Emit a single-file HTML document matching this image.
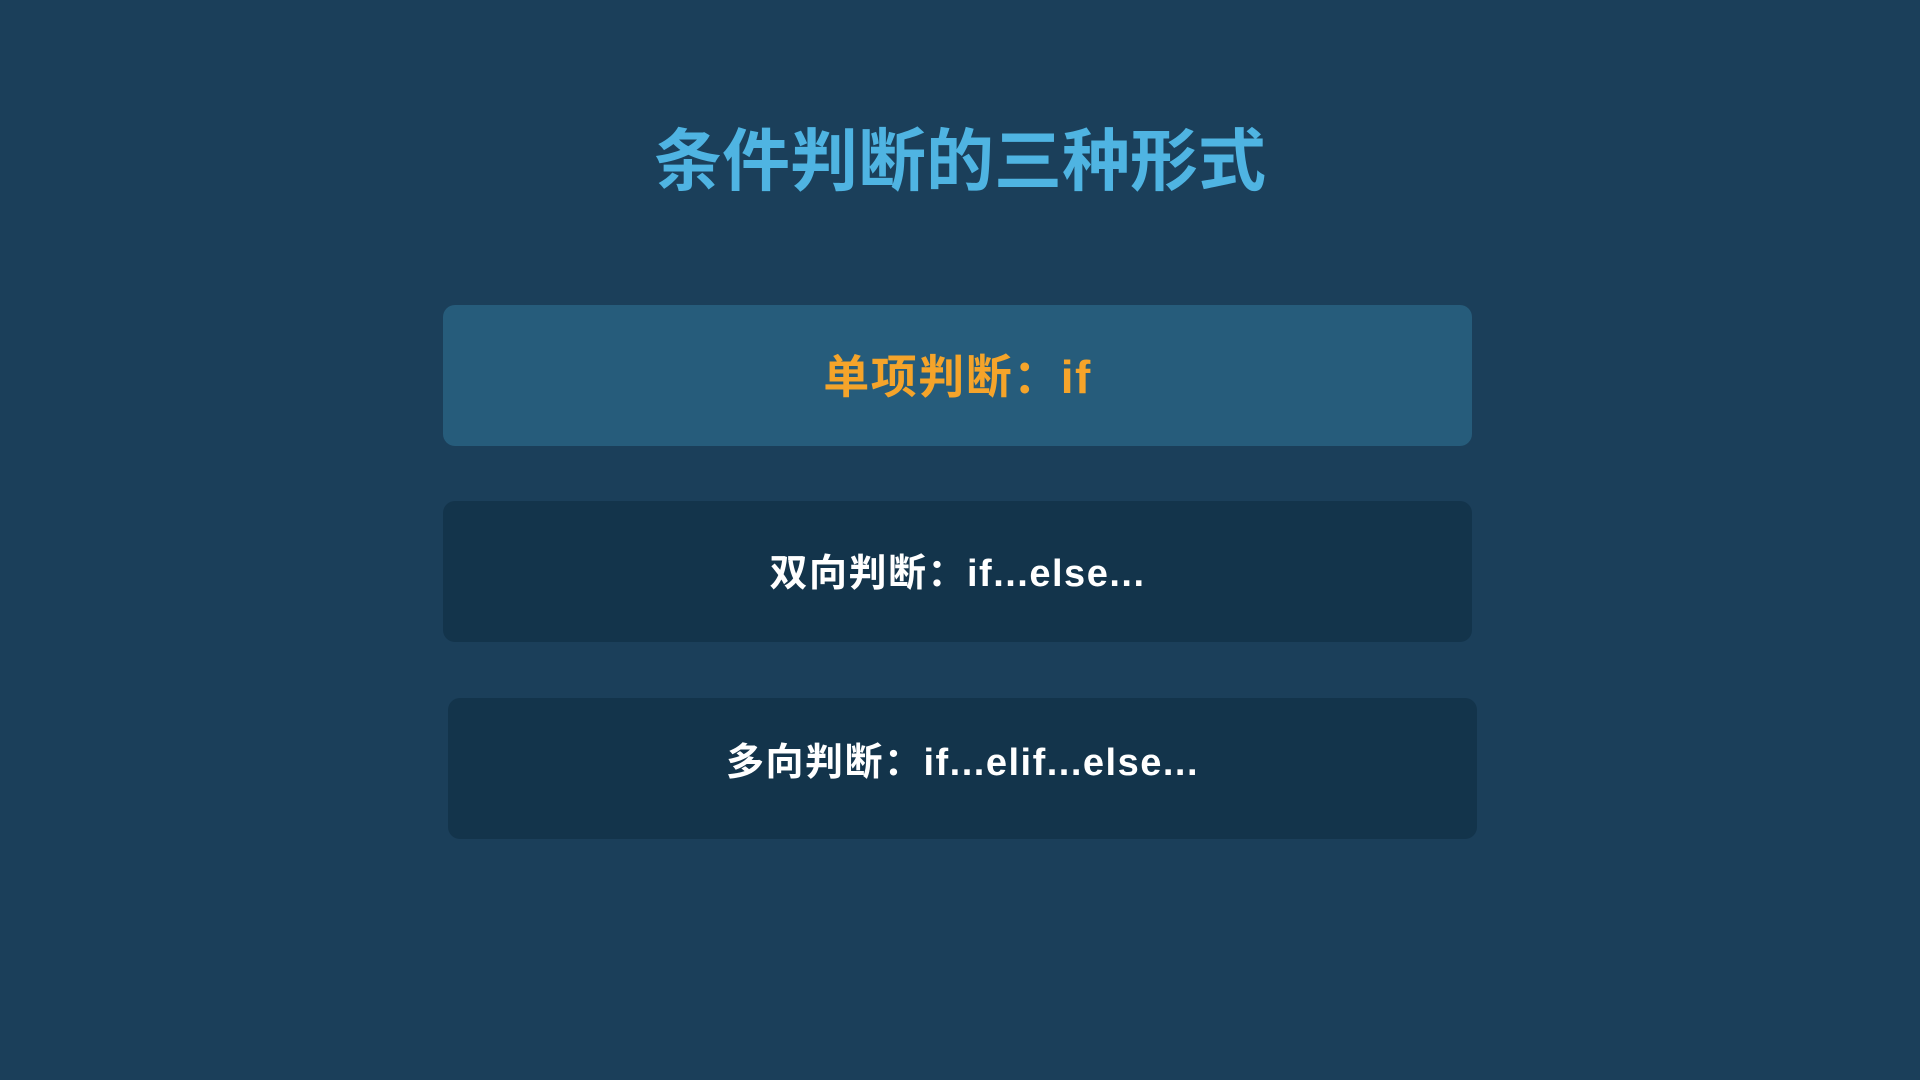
<!DOCTYPE html>
<html><head><meta charset="utf-8"><style>
html,body{margin:0;padding:0;}
body{width:1920px;height:1080px;background:#1b3f5a;position:relative;overflow:hidden;font-family:"Liberation Sans","Noto Sans CJK SC",sans-serif;font-weight:bold;}
.t{position:absolute;left:0;width:1920px;top:122px;text-align:center;color:#4fb4e2;font-size:68px;line-height:80px;}
.b{position:absolute;width:1029px;height:141px;border-radius:12px;display:flex;align-items:center;justify-content:center;box-sizing:border-box;}
.b1{left:443px;top:305px;background:#265c7b;color:#f5a42a;font-size:46px;letter-spacing:1.5px;padding-bottom:4px;}
.b2{left:443px;top:501px;background:#13344b;color:#fff;font-size:38px;letter-spacing:1.5px;padding-bottom:4px;}
.b3{left:448px;top:698px;background:#13344b;color:#fff;font-size:38px;letter-spacing:1.5px;padding-bottom:20px;}
</style></head><body>
<div class="t">条件判断的三种形式</div>
<div class="b b1">单项判断：if</div>
<div class="b b2">双向判断：if...else...</div>
<div class="b b3">多向判断：if...elif...else...</div>
</body></html>
